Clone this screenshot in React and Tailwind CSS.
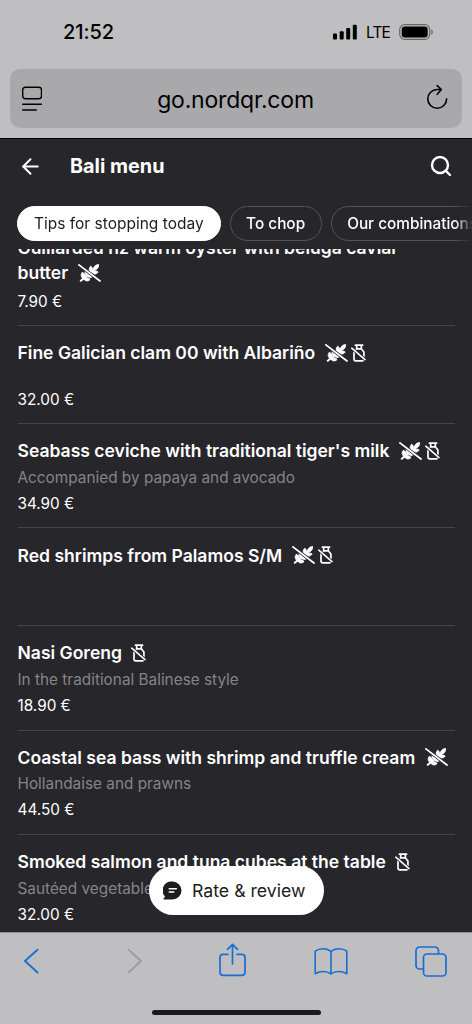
import React, { useState } from 'react';
import { ArrowLeft, Search } from 'lucide-react';

const categories = ['Tips for stopping today', 'To chop', 'Our combinations'];

const dishes = [
  { name: 'Fine Galician clam 00 with Albariño', price: '32.00 €', free: ['gluten', 'milk'] },
  {
    name: "Seabass ceviche with traditional tiger's milk",
    description: 'Accompanied by papaya and avocado',
    price: '34.90 €',
    free: ['gluten', 'milk'],
  },
  { name: 'Red shrimps from Palamos S/M', free: ['gluten', 'milk'] },
  {
    name: 'Nasi Goreng',
    description: 'In the traditional Balinese style',
    price: '18.90 €',
    free: ['milk'],
  },
  {
    name: 'Coastal sea bass with shrimp and truffle cream',
    description: 'Hollandaise and prawns',
    price: '44.50 €',
    free: ['gluten'],
  },
  {
    name: 'Smoked salmon and tuna cubes at the table',
    description: 'Sautéed vegetables',
    price: '32.00 €',
    free: ['milk'],
  },
];

const GlutenFreeIcon = () => (
  <svg className="h-[18px] w-[23px] shrink-0" viewBox="0 0 23 18" fill="currentColor">
    <g stroke="currentColor" strokeWidth="0.9" strokeLinejoin="round">
      {/* stalk */}
      <path d="M2.8 16.8 16.5 5.5" fill="none" strokeWidth="2" strokeLinecap="round" />
      {/* lower leaves */}
      <path d="M4.8 14.6C2.6 12.2 2.8 10.2 4.3 8.3 6.4 9.2 7.4 10.8 7.2 12.8z" />
      <path d="M8.2 11.6C6.6 9.4 6.8 7.2 8 5.6L12.5 9z" />
      <path d="M5.5 14.8c2.2-1.6 4.8-1.4 6.6.6-1.8 2-4.6 2.3-6.6-.6z" />
      <path d="M9.3 12c1.6-1.4 4-1.7 6-.2-1.2 1.9-3.9 2.4-6 .2z" />
      {/* upper leaves */}
      <path d="M12 8.2C10.7 6 11 3.8 12.7 2.2c1.9 1.3 2.5 3.2 1.6 5.4z" />
      <path d="M15.3 6.4C15.3 3 17 .9 20.6.5c.2 3.4-1.7 5.6-5.3 5.9z" />
      <path d="M13.5 8.6c1.8-1.9 4.8-2.1 6.7-.6-1.5 2.3-4.5 2.9-6.7.6z" />
    </g>
    <path d="M.9.9 22 17" fill="none" stroke="#27262b" strokeWidth="3.2" />
    <path d="M.9.9 22 17" fill="none" stroke="currentColor" strokeWidth="1.8" strokeLinecap="round" />
  </svg>
);

const MilkFreeIcon = () => (
  <svg className="h-[18px] w-[15px] shrink-0" viewBox="0 0 15 18" fill="none" stroke="currentColor" strokeWidth="1.7" strokeLinecap="round" strokeLinejoin="round">
    <path d="M4.4 1.2h7.2M5.7 1.5v3.3L3 8v7.1c0 1.1.7 1.7 1.8 1.7h6.400c1.100 0 1.700-.6 1.700-1.700V8l-2.600-3.200V1.500M5.700 4.800h4.600" />
    <path d="M.8 4.200 14 15.600" stroke="#27262b" strokeWidth="3.2" />
    <path d="M.8 4.200 14 15.600" strokeWidth="1.6" />
  </svg>
);

const DishTitle = ({ name, free }) => (
  <h2 className="flex h-[26px] items-center whitespace-nowrap text-[17.55px] font-semibold">
    <span>{name}</span>
    <span className="ml-[9.5px] flex items-center gap-[3.5px] pb-px">
      {free.includes('gluten') && <GlutenFreeIcon />}
      {free.includes('milk') && <MilkFreeIcon />}
    </span>
  </h2>
);

const Dish = ({ dish }) => (
  <li className={`border-t border-[#454449] pt-[14.2px] ${dish.description ? 'h-[104.4px]' : 'h-[97.8px]'}`}>
    <DishTitle name={dish.name} free={dish.free} />
    <p className={`pt-[0.4px] text-[15.35px] leading-[26px] text-[#85848a] ${dish.description ? 'h-[26.4px]' : 'h-[20.4px]'}`}>
      {dish.description}
    </p>
    <p className="text-[15.3px] leading-[26px]">{dish.price}</p>
  </li>
);

const StatusBar = () => (
  <div className="flex h-[69px] items-center pb-[5px] pl-[63px] pr-[38px]">
    <span className="text-[20px] font-medium tracking-[-0.1px]">21:52</span>
    <div className="ml-auto flex items-center">
      <svg className="h-4 w-6" viewBox="0 0 24 16" fill="currentColor">
        <rect x="0" y="9.5" width="4" height="6" rx="1" />
        <rect x="6.7" y="7.2" width="4" height="8.3" rx="1" />
        <rect x="13.2" y="4" width="4" height="11.5" rx="1" />
        <rect x="19.8" y="0.8" width="4" height="14.7" rx="1" />
      </svg>
      <span className="ml-[9px] pt-px text-[15.5px] tracking-[-0.9px]">LTE</span>
      <svg className="ml-[9px] h-4 w-[35px]" viewBox="0 0 35 16">
        <rect x="0.7" y="0.7" width="30" height="14.6" rx="5" fill="none" stroke="#68686a" strokeWidth="1.2" />
        <rect x="2.7" y="2.5" width="26" height="11" rx="3.2" fill="black" />
        <path d="M32.3 5.2c2 .8 2 4.8 0 5.6z" fill="#68686a" />
      </svg>
    </div>
  </div>
);

const AddressBar = () => (
  <div className="mx-2.5 flex h-[59px] items-center rounded-[10px] bg-[#a9a9ab] pl-3 pr-[14px]">
    <svg className="h-[26px] w-5" viewBox="0 0 20 26" fill="none" stroke="currentColor" strokeWidth="1.4" strokeLinecap="round">
      <rect x="0.7" y="1.3" width="18.8" height="11.4" rx="2.6" />
      <path d="M.7 18.2h18.8M.7 24h13.6" />
    </svg>
    <span className="flex-1 pl-[3px] pt-[3px] text-center text-[23px] tracking-[-0.2px]">go.nordqr.com</span>
    <svg className="-mt-1 h-[26px] w-[22px]" viewBox="0 0 22 26" fill="none" stroke="currentColor" strokeWidth="1.6" strokeLinecap="round" strokeLinejoin="round">
      <path d="M20.6 14.9A9.4 9.4 0 1 1 11.2 5.500h4M11.200 1.600l4.200 3.900-4.200 4.800" />
    </svg>
  </div>
);

const Toolbar = () => (
  <footer className="h-[92px] shrink-0 border-t border-[#929294] bg-[#bfbfc1] pt-2">
    <div className="flex h-10 items-center pl-6 text-[#176fd1]">
      <svg className="h-[26px] w-[15px]" viewBox="0 0 15 26" fill="none" stroke="currentColor" strokeWidth="1.9" strokeLinecap="round" strokeLinejoin="round">
        <path d="M13.5 1.7 1 13l12.5 11.5" />
      </svg>
      <svg className="ml-[88px] h-[26px] w-[15px]" viewBox="0 0 15 26" fill="none" stroke="#9b9b9d" strokeWidth="1.7" strokeLinecap="round" strokeLinejoin="round">
        <path d="M1.5 1.7 14 13 1.5 24.5" />
      </svg>
      <svg className="-mt-0.5 ml-[76.5px] h-[34px] w-[27px]" viewBox="0 0 27 34" fill="none" stroke="currentColor" strokeWidth="1.7" strokeLinecap="round" strokeLinejoin="round">
        <path d="M9 11.3H4a3 3 0 0 0-3 3v15a3 3 0 0 0 3 3h19a3 3 0 0 0 3-3v-15a3 3 0 0 0-3-3h-5" />
        <path d="M13.5 21V1.5M8.5 6.3l5-5 5 5" />
      </svg>
      <svg className="ml-[68.5px] h-[29px] w-[34px]" viewBox="0 0 34 29" fill="none" stroke="currentColor" strokeWidth="1.6" strokeLinejoin="round">
        <path d="M17 4.5C13 .8 5.5.8 1.2 4.2v22.5C6 23.8 13 23.6 17 27c4-3.4 11-3.2 15.8-.3V4.2C28.5.8 21 .8 17 4.5zM17 4.5V27" />
      </svg>
      <svg className="ml-[67px] h-[31px] w-8" viewBox="0 0 32 31" fill="none" stroke="currentColor" strokeWidth="1.7" strokeLinejoin="round">
        <rect x="8.5" y="8" width="22.5" height="22" rx="3.5" />
        <path d="M8.5 23H4.5A3.5 3.5 0 0 1 1 19.5v-15A3.5 3.5 0 0 1 4.5 1H20a3.5 3.5 0 0 1 3.5 3.5V8" />
      </svg>
    </div>
    <div className="mx-auto mt-[29px] h-[5px] w-[169px] rounded-full bg-[#1b1b1b]" />
  </footer>
);

const App = () => {
  const [selected, setSelected] = useState(categories[0]);

  return (
    <div className="relative flex h-[1024px] w-[472px] flex-col overflow-hidden bg-[#27262b] font-['Inter',sans-serif] text-white">
      <header className="h-[139px] shrink-0 border-b border-black bg-[#bfbfc1] text-black">
        <StatusBar />
        <AddressBar />
      </header>

      <div className="h-[110px] shrink-0">
        <div className="flex h-[54px] items-center pl-[18px] pr-[19px]">
          <ArrowLeft className="h-[25px] w-[25px]" strokeWidth={1.9} />
          <h1 className="ml-[27px] pt-px text-[19.8px] font-bold">Bali menu</h1>
          <Search className="ml-auto h-6 w-6" strokeWidth={2.4} />
        </div>
        <div className="mt-[13px] flex gap-[9px] overflow-hidden pl-[17px] [mask-image:linear-gradient(to_right,black_454px,transparent_473px)]">
          {categories.map((category) => (
            <button
              key={category}
              onClick={() => setSelected(category)}
              className={`h-[35px] shrink-0 whitespace-nowrap rounded-full border ${
                selected === category
                  ? 'border-white bg-white px-4 text-[15.5px] text-[#1d1d20]'
                  : 'border-[#545359] px-[15.5px] pt-px text-[15.35px] font-medium'
              }`}
            >
              {category}
            </button>
          ))}
        </div>
      </div>

      <main className="min-h-0 flex-1 overflow-hidden px-[17.5px]">
        <ul className="-mt-[14.5px]">
          <li className="h-[90.8px]">
            <p className="h-[26px] whitespace-nowrap text-[17.55px] font-semibold leading-[26px]">
              Guillardeu nz warm oyster with beluga caviar
            </p>
            <DishTitle name="butter" free={['gluten']} />
            <p className="pt-0.5 text-[15.3px] leading-[26px]">7.90 €</p>
          </li>
          {dishes.map((dish) => (
            <Dish key={dish.name} dish={dish} />
          ))}
        </ul>
      </main>

      <Toolbar />

      {/* Floating review button */}
      <button className="absolute left-[149px] top-[866px] flex h-[49px] w-[175px] items-center rounded-full bg-white pl-3.5 text-[17.7px] text-[#1d1d20]">
        <svg className="h-[19px] w-[19px]" viewBox="0 0 19 19">
          <path d="M9.5.5a9 9 0 1 1 0 18H1.2c-.8 0-.9-.8-.4-1.3l1.3-1.5A9 9 0 0 1 9.5.5z" fill="currentColor" />
          <path d="M6.3 7.7h7M6.3 11h4.5" stroke="white" strokeWidth="1.6" strokeLinecap="round" />
        </svg>
        <span className="ml-[10px] whitespace-nowrap pt-px">Rate &amp; review</span>
      </button>
    </div>
  );
};

export default App;
